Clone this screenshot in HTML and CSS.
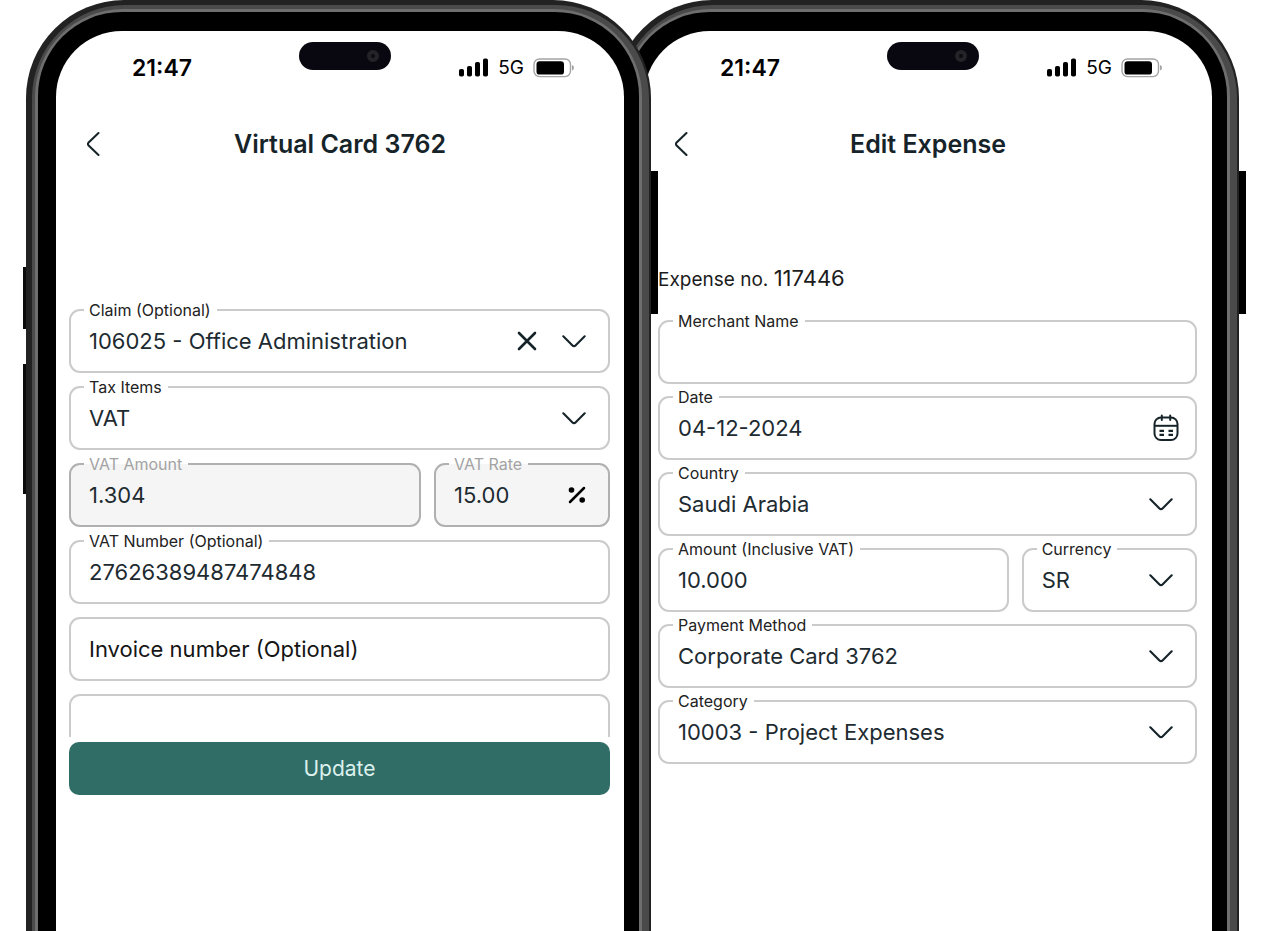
FILE: index.html
```html
<!DOCTYPE html>
<html lang="en">
<head>
<meta charset="utf-8">
<meta name="viewport" content="width=device-width, initial-scale=1">
<title>Expense forms</title>
<link rel="stylesheet" href="styles.css">
</head>
<body>
<svg class="sprite" aria-hidden="true">
  <symbol id="i-back" viewBox="0 0 14 26"><path d="M12.500 2 2.600 11.500a2.100 2.100 0 0 0 0 3L12.500 24" fill="none" stroke="currentColor" stroke-width="2.100" stroke-linecap="round"/></symbol>
  <symbol id="i-down" viewBox="0 0 24 13"><path d="M1.300 1.300l9.200 9.200a2.100 2.100 0 0 0 3 0l9.200-9.200" fill="none" stroke="currentColor" stroke-width="2.100" stroke-linecap="round"/></symbol>
  <symbol id="i-clear" viewBox="0 0 20 20"><path d="M2 2l16 16M18 2 2 18" fill="none" stroke="currentColor" stroke-width="2.600" stroke-linecap="round"/></symbol>
  <symbol id="i-percent" viewBox="0 0 18 18"><path d="M2 16 16 2" stroke="currentColor" stroke-width="2.500" stroke-linecap="round"/><circle cx="3.500" cy="4" r="2.800" fill="currentColor"/><circle cx="14.200" cy="14" r="2.800" fill="currentColor"/></symbol>
  <symbol id="i-calendar" viewBox="0 0 26 28"><g fill="none" stroke="currentColor" stroke-width="2"><rect x="1.500" y="3.500" width="23" height="22.500" rx="6.500"/><path d="M1.500 11.800h23"/><path d="M8.800 1.500v4.500M17.200 1.500v4.500" stroke-linecap="round"/><path d="M6.500 16.800h4.500M15.500 16.800H20M6.500 20.800h4.500M15.500 20.800H20" stroke-width="2.200"/></g></symbol>
  <symbol id="i-signal" viewBox="0 0 30 19"><rect y="11" width="5" height="7.500" rx="1.800"/><rect x="8" y="8" width="5" height="10.500" rx="1.800"/><rect x="16" y="4" width="5" height="14.500" rx="1.800"/><rect x="24" y="0.500" width="5" height="18" rx="1.800"/></symbol>
  <symbol id="i-battery" viewBox="0 0 42 20"><rect x="1" y="1" width="36.500" height="17.600" rx="5.500" fill="none" stroke="#a4a4a4" stroke-width="1.400"/><rect x="3.500" y="3.200" width="27.500" height="13.400" rx="3.200"/><path d="M39 7v5.500q2-.6 2-2.750T39 7z" fill="#a4a4a4"/></symbol>
</svg>

<main class="stage">
  <section class="phone phone-front">
    <span class="key key-volume-up"></span>
    <span class="key key-volume-down"></span>
    <span class="key key-power"></span>
    <div class="shell"><div class="rail"><div class="trim"><div class="bezel"><div class="screen">
      <div class="status">
        <time class="clock">21:47</time>
        <span class="island"><span class="lens"></span></span>
        <span class="signals">
          <svg class="signal"><use href="#i-signal"/></svg>
          <span class="network">5G</span>
          <svg class="battery"><use href="#i-battery"/></svg>
        </span>
      </div>
      <header class="topbar">
        <button class="icon-button back" type="button" aria-label="Back"><svg class="icon-back"><use href="#i-back"/></svg></button>
        <h1 class="title">Virtual Card 3762</h1>
      </header>
      <form class="form form-card">
        <div class="field">
          <label class="label" for="claim">Claim (Optional)</label>
          <select class="control" id="claim"><option>106025 - Office Administration</option></select>
          <button class="icon-button clear" type="button" aria-label="Clear claim"><svg class="icon-clear"><use href="#i-clear"/></svg></button>
          <svg class="icon-down"><use href="#i-down"/></svg>
        </div>
        <div class="field">
          <label class="label" for="tax">Tax Items</label>
          <select class="control" id="tax"><option>VAT</option></select>
          <svg class="icon-down"><use href="#i-down"/></svg>
        </div>
        <div class="pair">
          <div class="field is-disabled">
            <label class="label" for="vat-amount">VAT Amount</label>
            <input class="control" id="vat-amount" value="1.304" disabled>
          </div>
          <div class="field is-disabled">
            <label class="label" for="vat-rate">VAT Rate</label>
            <input class="control" id="vat-rate" value="15.00" disabled>
            <svg class="icon-percent"><use href="#i-percent"/></svg>
          </div>
        </div>
        <div class="field">
          <label class="label" for="vat-number">VAT Number (Optional)</label>
          <input class="control" id="vat-number" value="27626389487474848">
        </div>
        <div class="field">
          <input class="control" id="invoice" aria-label="Invoice number (Optional)" placeholder="Invoice number (Optional)">
        </div>
        <div class="field is-cut">
          <input class="control" aria-label="Notes">
        </div>
        <button class="submit" type="submit">Update</button>
      </form>
    </div></div></div></div></div>
  </section>

  <section class="phone phone-rear">
    <span class="key key-power"></span>
    <div class="shell"><div class="rail"><div class="trim"><div class="bezel"><div class="screen">
      <div class="status">
        <time class="clock">21:47</time>
        <span class="island"><span class="lens"></span></span>
        <span class="signals">
          <svg class="signal"><use href="#i-signal"/></svg>
          <span class="network">5G</span>
          <svg class="battery"><use href="#i-battery"/></svg>
        </span>
      </div>
      <header class="topbar">
        <button class="icon-button back" type="button" aria-label="Back"><svg class="icon-back"><use href="#i-back"/></svg></button>
        <h1 class="title">Edit Expense</h1>
      </header>
      <form class="form form-expense">
        <p class="reference">Expense no. <span class="number">117446</span></p>
        <div class="field">
          <label class="label" for="merchant">Merchant Name</label>
          <input class="control" id="merchant">
        </div>
        <div class="field">
          <label class="label" for="date">Date</label>
          <input class="control" id="date" value="04-12-2024">
          <svg class="icon-calendar"><use href="#i-calendar"/></svg>
        </div>
        <div class="field">
          <label class="label" for="country">Country</label>
          <select class="control" id="country"><option>Saudi Arabia</option></select>
          <svg class="icon-down"><use href="#i-down"/></svg>
        </div>
        <div class="pair">
          <div class="field">
            <label class="label" for="amount">Amount (Inclusive VAT)</label>
            <input class="control" id="amount" value="10.000">
          </div>
          <div class="field">
            <label class="label" for="currency">Currency</label>
            <select class="control" id="currency"><option>SR</option></select>
            <svg class="icon-down"><use href="#i-down"/></svg>
          </div>
        </div>
        <div class="field">
          <label class="label" for="payment">Payment Method</label>
          <select class="control" id="payment"><option>Corporate Card 3762</option></select>
          <svg class="icon-down"><use href="#i-down"/></svg>
        </div>
        <div class="field">
          <label class="label" for="category">Category</label>
          <select class="control" id="category"><option>10003 - Project Expenses</option></select>
          <svg class="icon-down"><use href="#i-down"/></svg>
        </div>
      </form>
    </div></div></div></div></div>
  </section>
</main>
</body>
</html>
```
FILE: styles.css
```css
* { box-sizing: border-box; }

body {
  margin: 0;
  background: #fff;
  color: #16242a;
  font-family: Inter, "Liberation Sans", sans-serif;
}

.sprite { display: none; }

.stage {
  display: flex;
  min-height: 100vh;
  padding: 0 23px 0 26px;
}

/* Phone frame */
.phone {
  position: relative;
  display: flex;
  flex: 1 1 0;
  min-width: 0;
}
.phone-front { z-index: 1; }
.phone-rear { margin-left: -37px; }

.shell, .rail, .trim, .bezel { display: flex; flex: 1; min-width: 0; }
.shell { padding: 5px 2px 0 6px; border-radius: 98px 98px 0 0; background: #222; }
.rail { padding: 4px 7px 0 3px; border-radius: 93px 93px 0 0; background: #4a4a4a; }
.trim { padding: 3px 3px 0 3px; border-radius: 88px 88px 0 0; background: #6e6e6e; }
.bezel { padding: 19px 15px 0 18px; border-radius: 84px 84px 0 0; background: #000; }
.screen { flex: 1; min-width: 0; border-radius: 66px 66px 0 0; background: #fff; }

.key { position: absolute; background: #0b0b0b; }
.key-power { top: 171px; left: 100%; width: 7px; height: 143px; background: #000; }
.key-volume-up { top: 267px; right: 100%; width: 3px; height: 62px; }
.key-volume-down { top: 364px; right: 100%; width: 3px; height: 130px; }

/* Status bar */
.status {
  display: grid;
  grid-template-columns: 167fr 92px 184fr;
  align-items: center;
  height: 62px;
  padding: 11px 49px 0 76px;
  color: #000;
}
.clock { font-size: 23px; font-weight: 600; line-height: 28px; }
.island {
  display: flex;
  align-items: center;
  justify-content: flex-end;
  align-self: start;
  height: 28px;
  padding-right: 12px;
  border-radius: 14px;
  background: #090811;
}
.lens { width: 12px; height: 12px; border: 4px solid #242328; border-radius: 50%; background: #0c0b12; }
.signals { display: flex; align-items: center; justify-content: flex-end; gap: 9px; }
.signal { width: 30px; height: 19px; }
.network { font-size: 19px; line-height: 26px; }
.battery { width: 42px; height: 20px; }

/* Title bar */
.topbar {
  display: grid;
  grid-template-columns: 1fr auto 1fr;
  align-items: center;
  height: 32px;
  margin-top: 35px;
  padding: 0 30px;
}
.title { margin: 0; font-size: 25px; font-weight: 600; line-height: 32px; }
.icon-button { display: flex; padding: 0; border: 0; background: none; color: inherit; }
.back { justify-self: start; }
.icon-back { width: 14px; height: 26px; }

/* Forms */
.form { display: flex; flex-direction: column; padding: 0 14px 0 13px; }
.form-card { gap: 13px; margin-top: 149px; }
.form-expense { gap: 12px; margin-top: 104px; padding: 0 15px 0 14px; }

.reference { margin: 0 0 14px; color: #1c1c1c; font-size: 19px; line-height: 28px; }
.number { font-size: 22px; }

.pair { display: grid; grid-template-columns: 2fr 1fr; gap: 13px; }

.field {
  position: relative;
  display: flex;
  align-items: center;
  min-width: 0;
  height: 64px;
  padding: 0 22px 0 18px;
  border: 2px solid #cbcbcb;
  border-radius: 11px;
}
.label {
  position: absolute;
  top: -11px;
  left: 13px;
  padding: 0 6px 0 5px;
  background: #fff;
  color: #222;
  font-size: 16px;
  line-height: 20px;
}
.control {
  flex: 1;
  width: 100%;
  min-width: 0;
  height: 48px;
  padding: 0;
  border: 0;
  outline: 0;
  appearance: none;
  background: transparent;
  color: #1d2b31;
  font: inherit;
  font-size: 22px;
  line-height: 28px;
  opacity: 1;
}
.control::placeholder { color: #151515; opacity: 1; }

.is-disabled { border-color: #b0b0b0; background: #f5f5f5; }
.is-disabled .label { background: linear-gradient(#fff 50%, #f5f5f5 50%); color: #a3a3a3; }

.is-cut { height: 43px; border-bottom: 0; border-radius: 11px 11px 0 0; }
.is-cut .control { height: 32px; }

.icon-down { flex: none; width: 24px; height: 13px; }
.icon-clear { width: 20px; height: 20px; }
.clear { margin-right: 25px; }
.icon-percent { flex: none; width: 18px; height: 18px; color: #000; }
.icon-calendar { flex: none; width: 26px; height: 28px; margin-right: -6px; }

.submit {
  height: 53px;
  margin-top: -8px;
  border: 0;
  border-radius: 10px;
  background: #306d67;
  color: #dcf0ec;
  font: inherit;
  font-size: 21px;
  line-height: 28px;
}
```
